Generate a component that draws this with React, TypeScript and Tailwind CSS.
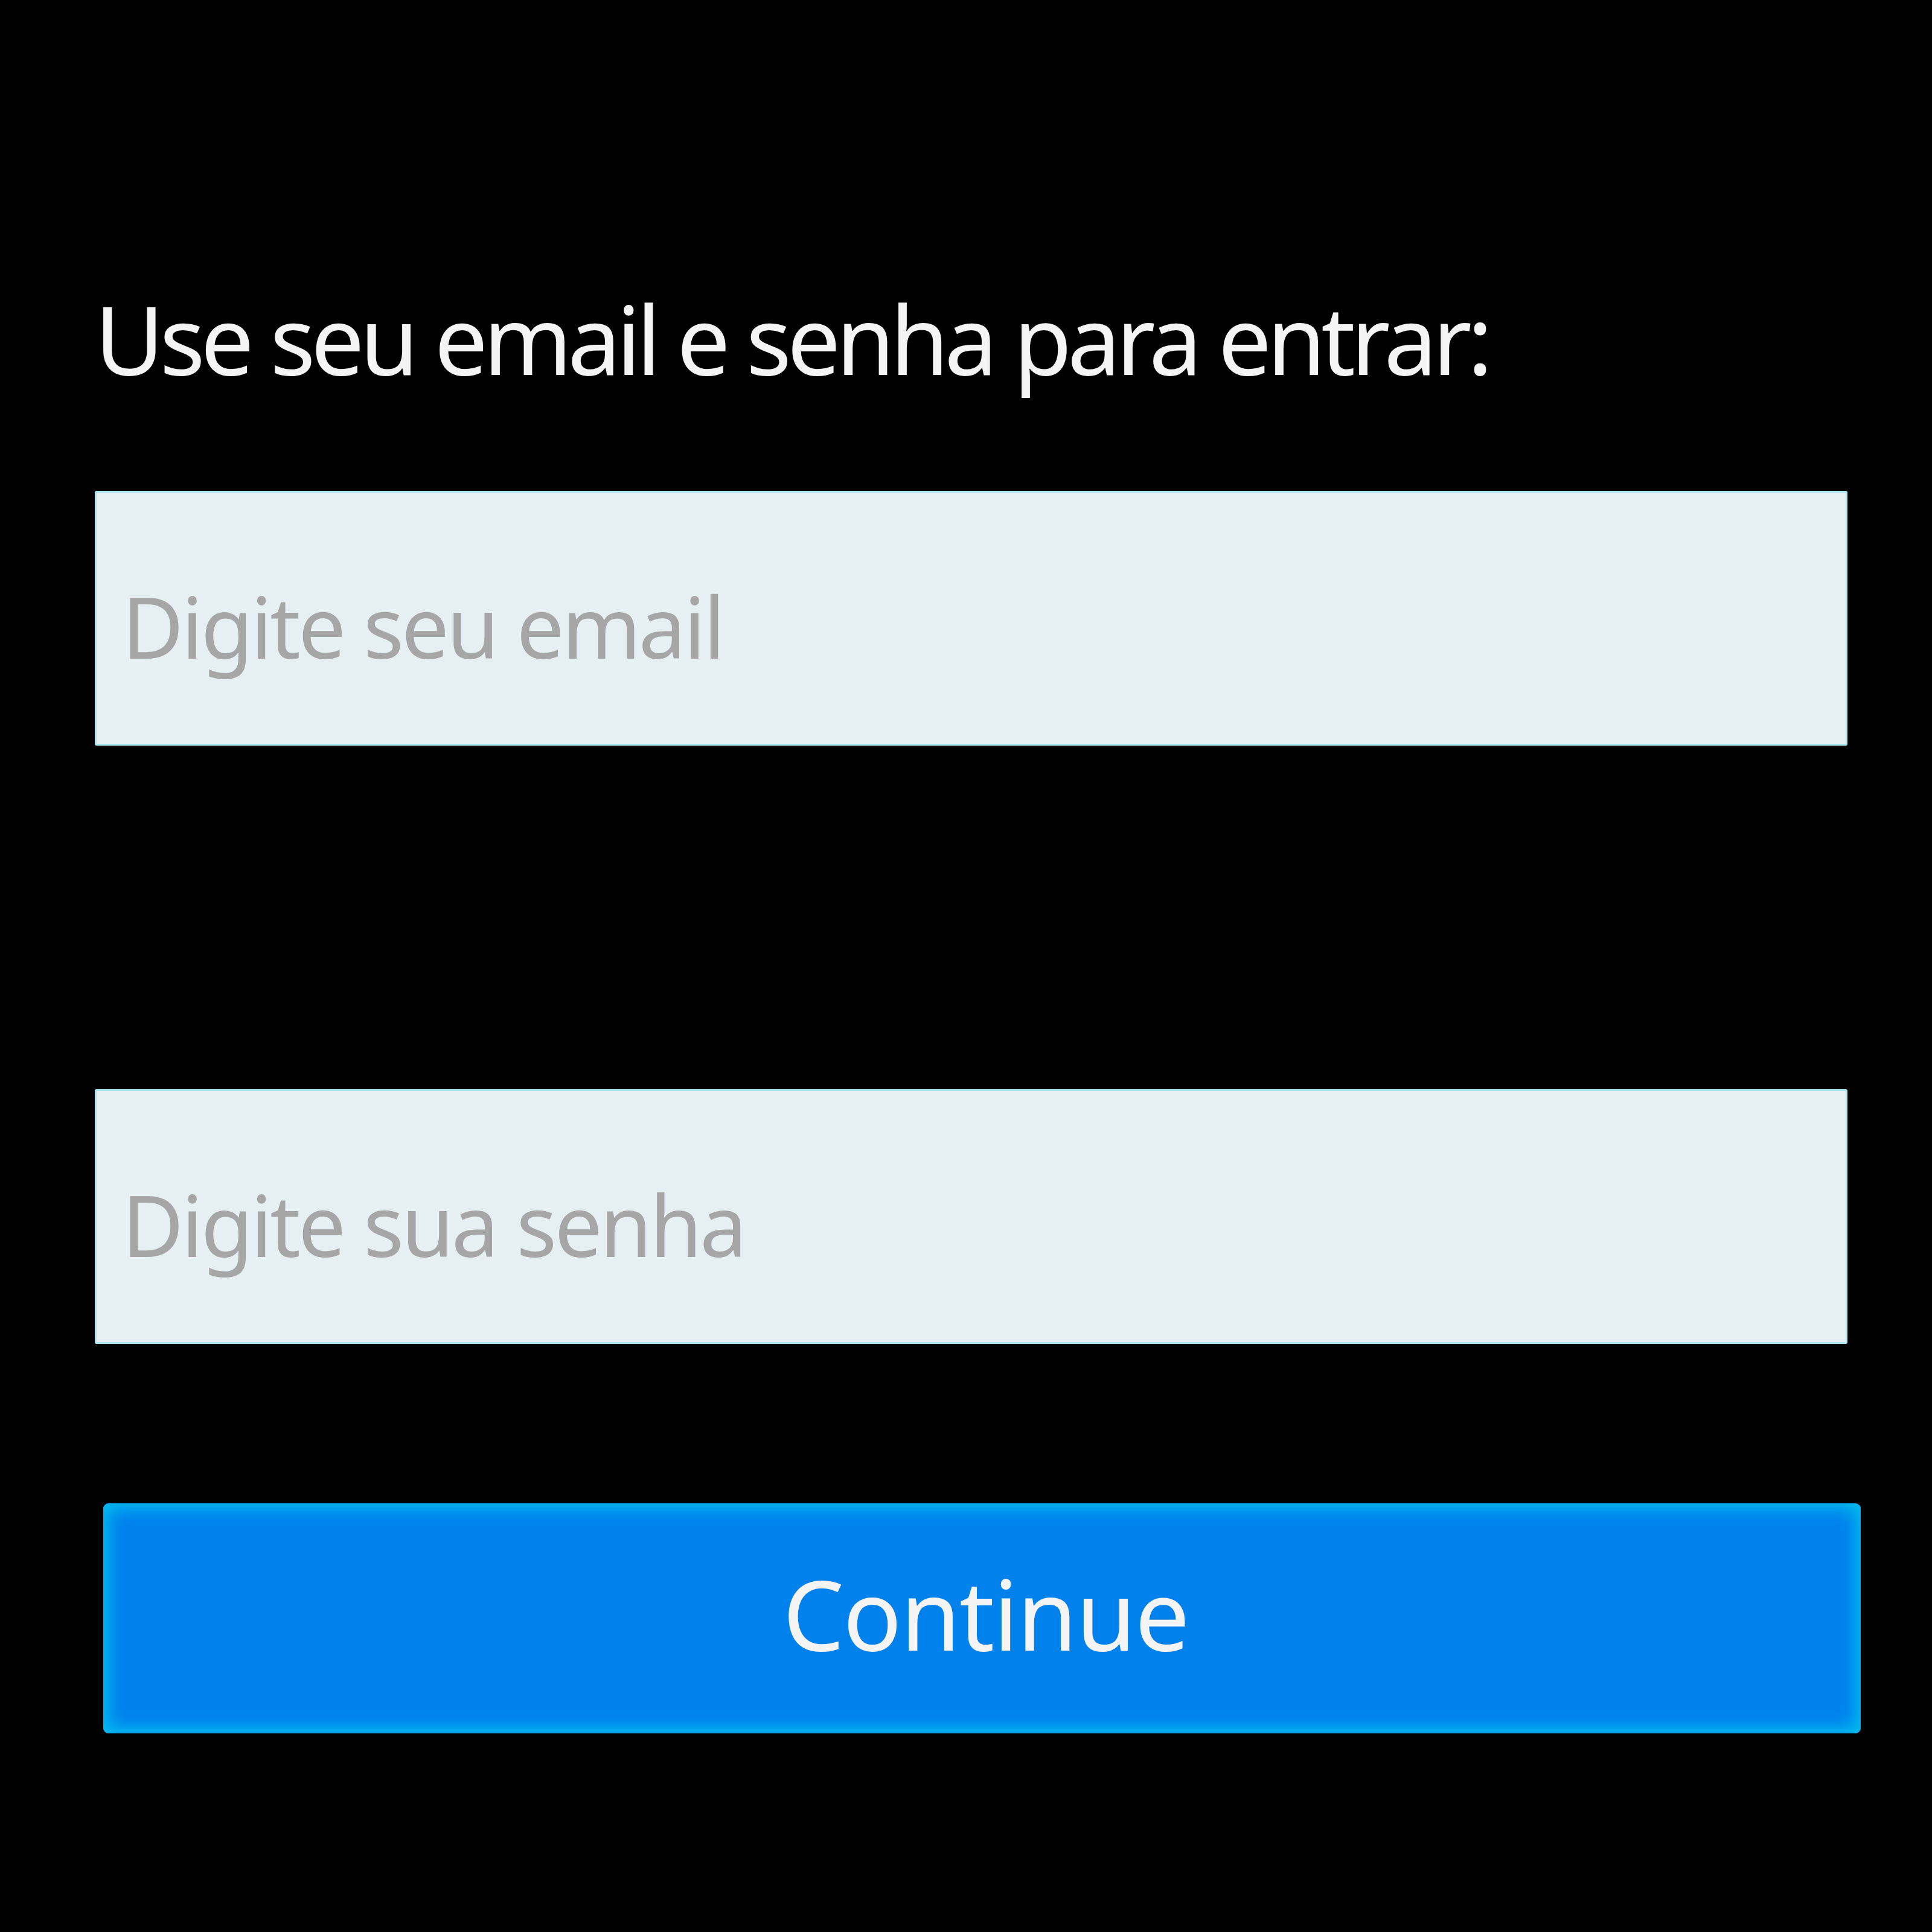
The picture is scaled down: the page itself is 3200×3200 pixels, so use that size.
import React from "react";

export default function App() {
  return (
    <div className="w-[3200px] h-[3200px] bg-black font-['Noto_Sans',_'Open_Sans',_sans-serif]">
      <div className="flex flex-col pl-[157px] pt-[482px]">
        <h1 className="text-[157px] leading-none font-normal tracking-[-7.3px] text-[#f4f4f4] whitespace-nowrap">
          Use seu email e senha para entrar:
        </h1>

        {/* Email field */}
        <input
          type="email"
          placeholder="Digite seu email"
          className="mt-[174px] w-[2903px] h-[422px] bg-[#e6eff2] border-[3px] border-[#a9e5f1] rounded-[3px] pl-[42px] pt-[24px] text-[140px] leading-none tracking-[-3.8px] text-[#555] placeholder:text-[#a6a6a6] outline-none"
        />

        {/* Password field */}
        <input
          type="password"
          placeholder="Digite sua senha"
          className="mt-[569px] w-[2903px] h-[422px] bg-[#e6eff2] border-[3px] border-[#a9e5f1] rounded-[3px] pl-[42px] pt-[24px] text-[140px] leading-none tracking-[-3.8px] text-[#555] placeholder:text-[#a6a6a6] outline-none"
        />

        <button className="mt-[264px] ml-[14px] w-[2911px] h-[381px] rounded-[9px] bg-[#0081ec] shadow-[inset_0_0_28px_8px_#00c0f0] flex items-center justify-center pb-[18px] pl-[12px] text-[161px] leading-none tracking-[-2px] text-[#f4f4f4] cursor-pointer">
          Continue
        </button>
      </div>
    </div>
  );
}
